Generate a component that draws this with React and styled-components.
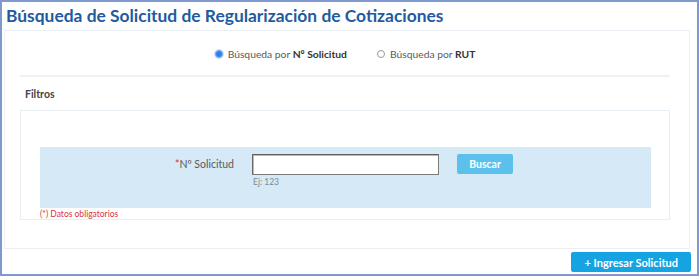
import React, { useState } from 'react';
import styled, { createGlobalStyle } from 'styled-components';

const GlobalStyle = createGlobalStyle`
  html, body {
    margin: 0;
    padding: 0;
    background: #ffffff;
    font-family: Lato, "Open Sans", Arial, sans-serif;
  }
`;

const Frame = styled.div`
  box-sizing: border-box;
  width: 699px;
  height: 276px;
  border: 2px solid #8099cc;
  padding: 2px 7px 0 2px;
  display: flex;
  flex-direction: column;
`;

const Title = styled.h1`
  margin: 0;
  height: 26px;
  line-height: 24px;
  padding-left: 2px;
  font-size: 17.4px;
  font-weight: 700;
  color: #1f5b9e;
`;

const Panel = styled.div`
  box-sizing: border-box;
  height: 219px;
  border: 1px solid #e9eff4;
  padding: 0 19px 0 15px;
  display: flex;
  flex-direction: column;
`;

const RadioRow = styled.div`
  height: 42px;
  border-bottom: 2px solid #eef2f5;
  display: flex;
  align-items: center;
  justify-content: center;
  gap: 30px;
  padding-top: 2px;
`;

const RadioOption = styled.label`
  display: flex;
  align-items: center;
  gap: 5px;
  font-size: 10.3px;
  color: #5a5a5a;
  cursor: pointer;

  b {
    color: #333;
    font-weight: 700;
  }
`;

const RadioDot = styled.span`
  box-sizing: border-box;
  width: 8px;
  height: 8px;
  border-radius: 50%;
  border: 1px solid ${p => (p.$checked ? '#7fb1ef' : '#9a9a9a')};
  background: ${p => (p.$checked ? '#2f7fe6' : '#fff')};
  box-shadow: ${p => (p.$checked ? '0 0 0 1px #cfe0f8' : 'none')};
`;

const SectionTitle = styled.div`
  font-size: 10.5px;
  font-weight: 700;
  color: #444;
  padding: 11px 0 0 5px;
  height: 22px;
`;

const Fieldset = styled.div`
  box-sizing: border-box;
  height: 110px;
  border: 1px solid #e8eff4;
  padding: 36px 18px 0 19px;
  display: flex;
  flex-direction: column;
`;

const Band = styled.div`
  height: 61px;
  background: #d5e9f6;
  display: grid;
  grid-template-columns: 194px 187px 56px;
  column-gap: 18px;
  align-items: start;
  padding-top: 7px;
  box-sizing: border-box;
`;

const FieldLabel = styled.label`
  text-align: right;
  font-size: 10.5px;
  color: #5a5a5a;
  padding-top: 4px;

  span {
    color: #d9333f;
  }
`;

const FieldCol = styled.div`
  display: flex;
  flex-direction: column;
  gap: 2px;
`;

const TextInput = styled.input`
  box-sizing: border-box;
  width: 187px;
  height: 21px;
  background: #fff;
  border: 1px solid #7a7a7a;
  border-top-color: #5f5f5f;
  border-left-color: #6a6a6a;
  box-shadow: inset 1px 1px 0 #b8b8b8;
  outline: none;
  padding: 0 4px;
  font-family: inherit;
`;

const Hint = styled.div`
  font-size: 8.5px;
  color: #7d8a95;
  padding-left: 1px;
`;

const Button = styled.button`
  box-sizing: border-box;
  height: ${p => p.$h || 20}px;
  border: none;
  border-radius: 2px;
  background: ${p => p.$bg};
  color: #fff;
  font-family: inherit;
  font-size: ${p => p.$fs || 10.5}px;
  font-weight: 700;
  padding: 0 ${p => p.$px || 8}px;
  cursor: pointer;
`;

const Required = styled.div`
  font-size: 8.5px;
  color: #d9333f;
  padding-top: 1px;
`;

const Footer = styled.div`
  display: flex;
  justify-content: flex-end;
  padding-top: 3px;
  margin-right: -1px;
`;

export default function App() {
  const [mode, setMode] = useState('solicitud');
  const [value, setValue] = useState('');

  return (
    <>
      <GlobalStyle />
      <Frame>
        <Title>Búsqueda de Solicitud de Regularización de Cotizaciones</Title>
        <Panel>
          <RadioRow>
            <RadioOption onClick={() => setMode('solicitud')}>
              <RadioDot $checked={mode === 'solicitud'} />
              <span>Búsqueda por <b>Nº Solicitud</b></span>
            </RadioOption>
            <RadioOption onClick={() => setMode('rut')}>
              <RadioDot $checked={mode === 'rut'} />
              <span>Búsqueda por <b>RUT</b></span>
            </RadioOption>
          </RadioRow>
          <SectionTitle>Filtros</SectionTitle>
          <Fieldset>
            <Band>
              <FieldLabel htmlFor="nro"><span>*</span>Nº Solicitud</FieldLabel>
              <FieldCol>
                <TextInput id="nro" value={value} onChange={e => setValue(e.target.value)} />
                <Hint>Ej: 123</Hint>
              </FieldCol>
              <Button $bg="#5bc1ec">Buscar</Button>
            </Band>
            <Required>(*) Datos obligatorios</Required>
          </Fieldset>
        </Panel>
        <Footer>
          <Button $bg="#16a3e2" $h={20} $px={13} $fs={11}>+ Ingresar Solicitud</Button>
        </Footer>
      </Frame>
    </>
  );
}
